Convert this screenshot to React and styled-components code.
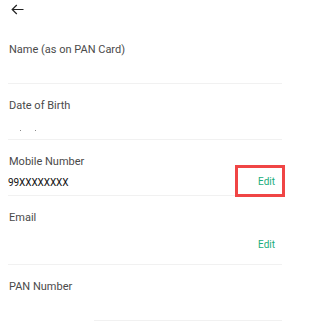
import React from "react";
import styled, { createGlobalStyle } from "styled-components";

const Global = createGlobalStyle`
  html, body { margin: 0; padding: 0; background: #fff; }
  body { font-family: Roboto, "Liberation Sans", Arial, sans-serif; }
`;

const Page = styled.div`
  width: 300px;
  height: 324px;
  overflow: hidden;
  background: #fff;
`;

const Header = styled.div`
  height: 28px;
  padding-left: 11px;
  padding-top: 4px;
  box-sizing: border-box;
  display: flex;
  align-items: flex-start;
`;

const Form = styled.div`
  padding-left: 8px;
  padding-right: 18px;
`;

const Field = styled.div`
  padding-top: 15px;
`;

const Label = styled.div`
  font-size: 11px;
  line-height: 14px;
  color: #4a4a4a;
  padding-left: 1px;
`;

const ValueRow = styled.div`
  height: 20px;
  margin-top: ${(p) => p.$top ?? 3}px;
  margin-bottom: ${(p) => p.$bottom ?? 3}px;
  display: flex;
  align-items: center;
  justify-content: space-between;
  padding-right: 7px;
`;

const Value = styled.div`
  font-size: 10px;
  color: #111;
  letter-spacing: -0.1px;
`;

const Specks = styled.div`
  display: flex;
  gap: 14px;
  padding-left: 12px;
  padding-top: 8px;
`;

const Speck = styled.span`
  width: 1px;
  height: 1px;
  background: #8a8a8a;
`;

const EditWrap = styled.div`
  position: relative;
  display: flex;
  align-items: center;
  font-size: 10px;
  line-height: 12px;
`;

const Edit = styled.span`
  font-size: 10px;
  line-height: 12px;
  color: #1aad7b;
`;

const Highlight = styled.div`
  position: absolute;
  left: -23px;
  right: -10px;
  top: -11px;
  bottom: -9px;
  border: 3px solid #f04545;
  pointer-events: none;
`;

const Divider = styled.div`
  height: 1px;
  background: #f1f1f1;
  margin-left: ${(p) => p.$inset || 0}px;
`;

const BackArrow = () => (
  <svg width="13" height="11" viewBox="0 0 13 11" fill="none" stroke="#222" strokeWidth="1.2">
    <path d="M12.5 5.5H1.2M5.8 1L1.2 5.5l4.6 4.5" />
  </svg>
);

export default function App() {
  return (
    <Page>
      <Global />
      <Header>
        <BackArrow />
      </Header>
      <Form>
        <Field>
          <Label>Name (as on PAN Card)</Label>
          <ValueRow />
          <Divider />
        </Field>
        <Field>
          <Label>Date of Birth</Label>
          <ValueRow>
            <Specks>
              <Speck />
              <Speck />
            </Specks>
          </ValueRow>
          <Divider />
        </Field>
        <Field>
          <Label>Mobile Number</Label>
          <ValueRow>
            <Value>99XXXXXXXX</Value>
            <EditWrap>
              <Edit>Edit</Edit>
              <Highlight />
            </EditWrap>
          </ValueRow>
          <Divider />
        </Field>
        <Field>
          <Label>Email</Label>
          <ValueRow $top={10} $bottom={9}>
            <Value />
            <EditWrap>
              <Edit>Edit</Edit>
            </EditWrap>
          </ValueRow>
          <Divider />
        </Field>
        <Field>
          <Label>PAN Number</Label>
          <ValueRow />
          <Divider $inset={86} />
        </Field>
      </Form>
    </Page>
  );
}
